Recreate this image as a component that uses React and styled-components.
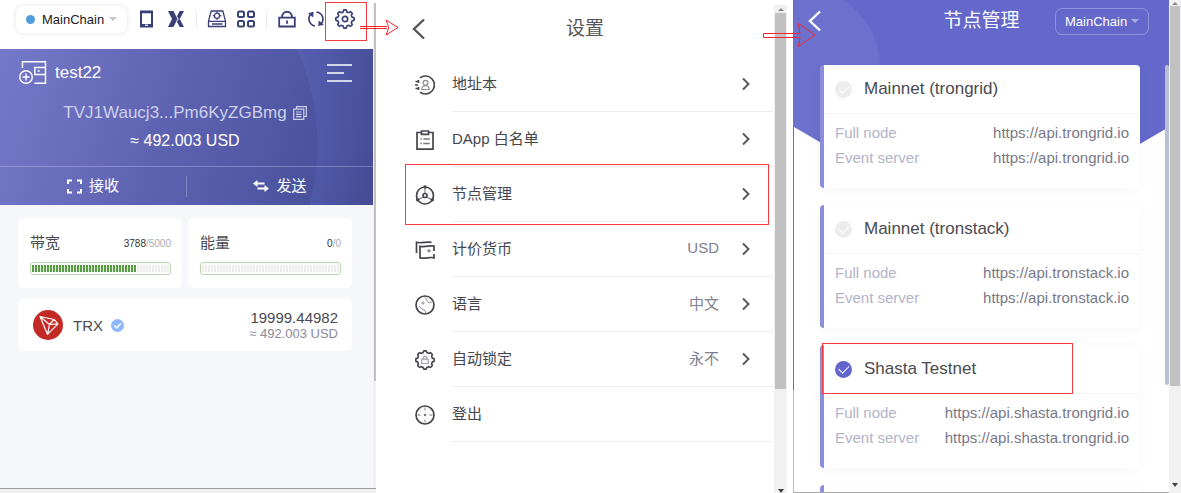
import React from "react";
import styled, { createGlobalStyle, css } from "styled-components";

const GlobalStyle = createGlobalStyle`
  * { box-sizing: border-box; }
  body {
    margin: 0;
    background: #fff;
    font-family: "Liberation Sans", "Noto Sans CJK SC", sans-serif;
    color: #4a4a50;
  }
  h1, h2, p, dl, dd, dt, ul { margin: 0; padding: 0; font-weight: 400; }
  button, select { font-family: inherit; }
`;

const Page = styled.main`
  display: grid;
  grid-template-columns: 376fr 417fr 388fr;
  height: 100vh;
  overflow: hidden;
`;

const Panel = styled.section`
  position: relative;
  display: flex;
  min-width: 0;
  min-height: 0;
`;

const Column = styled.div`
  flex: 1;
  min-width: 0;
  min-height: 0;
  display: flex;
  flex-direction: column;
`;

const IconButton = styled.button`
  position: relative;
  display: flex;
  align-items: center;
  justify-content: center;
  padding: 0;
  border: 0;
  background: none;
  color: inherit;
  cursor: pointer;
`;

const Mark = styled.span`
  position: absolute;
  inset: ${(p) => p.$inset};
  border: 1px solid #f23c40;
  pointer-events: none;
`;

const Arrow = styled.svg`
  position: absolute;
  z-index: 3;
  left: ${(p) => p.$left}px;
  top: ${(p) => p.$top}px;
  fill: none;
  stroke: #f2262c;
  pointer-events: none;
`;

/* ---------- chain selector ---------- */

const ChainBox = styled.div`
  display: flex;
  align-items: center;
  height: 27px;
  border-radius: 7px;
  ${(p) =>
    p.$dark
      ? css`
          width: 94px;
          padding: 0 9px;
          color: #fff;
          border: 1px solid rgba(255, 255, 255, 0.28);
        `
      : css`
          width: 111px;
          padding: 0 10px;
          color: #222;
          background: #fff;
          box-shadow: 0 0 5px rgba(0, 0, 0, 0.12);
        `}
`;

const Dot = styled.span`
  width: 9px;
  height: 9px;
  margin-right: 7px;
  border-radius: 50%;
  background: #4f9ddb;
`;

const ChainSelect = styled.select`
  appearance: none;
  flex: 1;
  min-width: 0;
  padding: 0;
  border: 0;
  background: none;
  color: inherit;
  font-size: 13px;
`;

const Caret = styled.span`
  border: 4px solid transparent;
  border-top-color: ${(p) => (p.$dark ? "#a9abe2" : "#c4c4cc")};
  border-bottom: 0;
`;

function Chain({ dark }) {
  return (
    <ChainBox $dark={dark}>
      {!dark && <Dot />}
      <ChainSelect aria-label="Chain" defaultValue="main">
        <option value="main">MainChain</option>
      </ChainSelect>
      <Caret $dark={dark} />
    </ChainBox>
  );
}

/* ---------- scrollbars ---------- */

const ScrollTrack = styled.div`
  width: ${(p) => p.$width}px;
  margin-top: ${(p) => p.$top}px;
  display: flex;
  flex-direction: column;
  align-items: center;
  background: #f1f1f1;
`;

const ScrollEnd = styled.span`
  display: flex;
  align-items: center;
  justify-content: center;
  height: ${(p) => p.$height}px;
`;

const ScrollThumb = styled.span`
  width: ${(p) => p.$width}px;
  flex: 0 0 ${(p) => p.$share}%;
  background: #c1c1c1;
`;

const Tip = styled.i`
  border: 3px solid transparent;
  ${(p) =>
    p.$up
      ? "border-bottom-color: #8a8a8a; border-top: 0;"
      : "border-top: 4px solid #404040; border-bottom: 0;"}
`;

const Spacer = styled.span`
  flex: 1;
`;

/* ---------- wallet ---------- */

const WalletBody = styled.div`
  flex: 1;
  display: flex;
  min-height: 0;
`;

const Toolbar = styled.header`
  display: flex;
  align-items: center;
  gap: 10px;
  height: 49px;
  padding: 0 0 11px 16px;
  color: #393f77;
`;

const ToolGroup = styled.div`
  display: flex;
  gap: 9px;
  ${IconButton} { width: 20px; height: 20px; }
`;

const Divider = styled.span`
  width: 1px;
  height: 17px;
  background: #ebebeb;
`;

const Hero = styled.section`
  display: flex;
  flex-direction: column;
  color: #fff;
  background:
    radial-gradient(circle at 85px 96px, transparent 232px, rgba(120, 140, 255, 0.12) 233px, transparent 300px),
    linear-gradient(108deg, #7579c9 0%, #5e63b1 45%, #4c54a0 80%, #444a91 100%);
`;

const HeroTop = styled.div`
  display: flex;
  align-items: center;
  gap: 8px;
  height: 24px;
  margin: 12px 21px 14px 19px;
  ${IconButton} { margin-left: auto; }
`;

const WalletName = styled.h1`
  font-size: 17px;
`;

const Address = styled.p`
  display: flex;
  align-items: center;
  justify-content: center;
  gap: 6px;
  padding-right: 3px;
  font-size: 17px;
  line-height: 28px;
  color: #ced0ec;
`;

const Balance = styled.p`
  margin-bottom: 11px;
  padding-right: 3px;
  text-align: center;
  font-size: 16px;
  line-height: 28px;
`;

const HeroActions = styled.div`
  display: flex;
  align-items: center;
  height: 39px;
  border-top: 1px solid rgba(255, 255, 255, 0.25);
`;

const HeroAction = styled(IconButton)`
  flex: 1;
  gap: 7px;
  height: 38px;
  font-size: 15px;
  color: #fff;
`;

/* Lifts CJK glyphs onto the optical centre of the icons beside them. */
const Label = styled.span`
  padding-bottom: 3px;
`;

const HeroDivider = styled.span`
  width: 1px;
  height: 21px;
  background: rgba(255, 255, 255, 0.25);
`;

const Assets = styled.div`
  flex: 1;
  display: flex;
  flex-direction: column;
  gap: 11px;
  padding: 13px 21px 0 18px;
  background: #f6f7fa;
`;

const Resources = styled.div`
  display: grid;
  grid-template-columns: 1fr 1fr;
  gap: 6px;
`;

const Card = styled.section`
  background: #fff;
  border-radius: 5px;
`;

const ResourceCard = styled(Card)`
  height: 70px;
  padding: 13px 11px 0 12px;
`;

const ResourceHead = styled.div`
  display: flex;
  align-items: center;
  justify-content: space-between;
  height: 24px;
  margin-bottom: 7px;
`;

const ResourceName = styled.h2`
  padding-bottom: 3px;
  font-size: 15px;
`;

const Usage = styled.span`
  font-size: 10px;
  color: ${(p) => (p.$muted ? "#aaaab2" : "#333")};
`;

const Meter = styled.div`
  height: 13px;
  padding: 2px 1px;
  border: 1px solid #b9d8af;
  border-radius: 3px;
`;

const MeterTrack = styled.div`
  height: 7px;
  background: repeating-linear-gradient(90deg, #ececec 0 2px, #fff 2px 3px);
`;

const MeterFill = styled.div`
  height: 7px;
  background: repeating-linear-gradient(90deg, #5a9c45 0 2px, #e4f0df 2px 3px);
`;

function Resource({ name, used, total }) {
  const share = total ? (used / total) * 100 : 0;
  return (
    <ResourceCard>
      <ResourceHead>
        <ResourceName>{name}</ResourceName>
        <Usage>
          {used}
          <Usage $muted>/{total}</Usage>
        </Usage>
      </ResourceHead>
      <Meter role="meter" aria-label={name} aria-valuenow={used} aria-valuemin={0} aria-valuemax={total}>
        <MeterTrack>
          <MeterFill style={{ width: `${share}%` }} />
        </MeterTrack>
      </Meter>
    </ResourceCard>
  );
}

const TokenCard = styled(Card)`
  display: flex;
  align-items: center;
  height: 52px;
  padding: 0 14px 0 15px;
`;

const TokenName = styled.span`
  margin: 0 8px 0 10px;
  font-size: 15px;
`;

const TokenValue = styled.div`
  margin-left: auto;
  text-align: right;
`;

const Amount = styled.p`
  font-size: 15px;
  line-height: 17px;
`;

const Fiat = styled.p`
  font-size: 13px;
  line-height: 15px;
  color: #8a8a98;
`;

const BottomEdge = styled.div`
  height: 5px;
  border-top: 1px solid #9c9c9c;
  background: #f0f0f0;
`;

/* ---------- settings ---------- */

const SettingsColumn = styled(Column)`
  padding-left: 20px;
`;

const SettingsHeader = styled.header`
  display: grid;
  grid-template-columns: 1fr auto 1fr;
  align-items: center;
  height: 57px;
  color: #555;
`;

const BackButton = styled(IconButton)`
  justify-self: start;
  margin-left: ${(p) => p.$left}px;
`;

const Title = styled.h1`
  font-size: 19px;
  line-height: 28px;
`;

const SettingsList = styled.ul`
  list-style: none;
`;

const SettingItem = styled.li`
  position: relative;
`;

const SettingButton = styled.button`
  display: flex;
  align-items: center;
  gap: 17px;
  width: 100%;
  height: 55px;
  padding: 0 1px 0 19px;
  border: 0;
  background: none;
  color: #45454d;
  font-size: 15px;
  text-align: left;
  cursor: pointer;
`;

const SettingBody = styled.span`
  flex: 1;
  align-self: stretch;
  display: flex;
  align-items: center;
  gap: 23px;
  padding-right: 23px;
  border-bottom: 1px solid #ededed;
`;

const SettingValue = styled(Label)`
  margin-left: auto;
  color: #80808e;
`;

const PanelGap = styled.div`
  width: 6px;
`;

/* ---------- nodes ---------- */

const LeftRule = styled.div`
  width: 1px;
  background: linear-gradient(#6468cb 0 22px, #dd4a55 22px 390px, #bdbdbd 390px);
`;

const NodesColumn = styled(Column)`
  position: relative;
  border-bottom: 1px solid #a8a8a8;
  &::before {
    content: "";
    position: absolute;
    inset: 0 0 auto 0;
    height: 162px;
    background: radial-gradient(circle at 10px 65px, #6d71ce 75px, #6468cb 76px);
    clip-path: polygon(0 0, 100% 0, 100% 127px, calc(100% - 60px) 162px, 60px 162px, 0 127px);
  }
`;

const NodesHeader = styled.header`
  position: relative;
  display: grid;
  grid-template-columns: 1fr auto 1fr;
  align-items: center;
  flex: 0 0 65px;
  padding-bottom: 23px;
  color: #fff;
  ${ChainBox} { justify-self: end; margin-right: 20px; }
`;

const NodesScroll = styled.div`
  position: relative;
  flex: 1;
  min-height: 0;
  display: flex;
  overflow: hidden;
`;

const NodeList = styled.div`
  flex: 1;
  display: flex;
  flex-direction: column;
  gap: 17px;
  padding: 0 25px 0 26px;
`;

const NodeThumb = styled.span`
  width: 4px;
  height: 75%;
  border-radius: 2px;
  background: #bac0d3;
`;

const NodeCard = styled.section`
  flex: none;
  min-height: 123px;
  border-left: 4px solid #8b8edb;
  border-radius: 4px;
  background: #fff;
  box-shadow: 0 2px 12px rgba(0, 0, 0, 0.04);
`;

const NodeHead = styled.label`
  position: relative;
  display: flex;
  align-items: center;
  gap: 12px;
  height: 49px;
  padding: 0 11px;
  border-bottom: 1px solid #f5f5f5;
  font-size: 17px;
`;

const Radio = styled.input`
  appearance: none;
  display: flex;
  align-items: center;
  justify-content: center;
  width: 17px;
  height: 17px;
  margin: 0;
  border-radius: 50%;
  background: #ececec;
  &:checked { background: #6266cb; }
  &::after {
    content: "";
    width: 9px;
    height: 5px;
    margin-bottom: 3px;
    border: solid #fff;
    border-width: 0 0 1px 1px;
    transform: rotate(-45deg);
  }
`;

const NodeInfo = styled.dl`
  padding: 6px 11px 18px;
  font-size: 15px;
  line-height: 25px;
`;

const NodeRow = styled.div`
  display: flex;
  justify-content: space-between;
  dt { color: #b3b3c8; }
  dd { color: #787887; }
`;

function Node({ name, url, checked, marked }) {
  return (
    <NodeCard>
      <NodeHead>
        <Radio type="radio" name="node" defaultChecked={checked} />
        {name}
        {marked && <Mark $inset="-2px 67px -1px -2px" />}
      </NodeHead>
      <NodeInfo>
        <NodeRow>
          <dt>Full node</dt>
          <dd>{url}</dd>
        </NodeRow>
        <NodeRow>
          <dt>Event server</dt>
          <dd>{url}</dd>
        </NodeRow>
      </NodeInfo>
    </NodeCard>
  );
}

/* ---------- drawings ---------- */

const Svg = ({ w = 20, h = w, sw = 1.5, children, ...rest }) => (
  <svg width={w} height={h} viewBox={`0 0 ${w} ${h}`} fill="none" stroke="currentColor" strokeWidth={sw} aria-hidden="true" {...rest}>
    {children}
  </svg>
);

const gearPath = (c, r, amp, teeth) => {
  let d = "";
  for (let i = 0; i <= 96; i++) {
    const a = (i / 96) * Math.PI * 2;
    const k = Math.max(-1, Math.min(1, 1.8 * Math.cos(teeth * a)));
    const q = r + amp * k;
    d += `${i ? "L" : "M"}${(c + q * Math.sin(a)).toFixed(2)} ${(c - q * Math.cos(a)).toFixed(2)}`;
  }
  return d + "Z";
};

const PhoneIcon = () => (
  <Svg>
    <path strokeWidth="2" d="M4 2.5h11v15H4z" />
    <path strokeWidth="2" d="M4 3.2h11M4 16h11" />
    <path stroke="#fff" strokeWidth="1.2" d="M8 16.2h3" />
  </Svg>
);
const XIcon = () => (
  <Svg>
    <path fill="currentColor" stroke="none" d="M2 2h5.5l4 8-4 8H2l4-8z" />
    <path fill="currentColor" stroke="none" d="M18 2h-4.3l-2.8 5.3 1.8 2.7-1.8 2.7 2.8 5.3H18l-4.3-8z" />
  </Svg>
);
const DiskIcon = () => (
  <Svg sw={1.3}>
    <path d="M4.2 2h11.6L18.5 12v5.5h-17V12zM1.5 12.3h17M5 15h10.500" />
    <circle cx="10" cy="6.700" r="2.600" />
    <path d="M5.800 6.700h1.600M12.600 6.700h1.600M10 9.300v1.500M10 2.800v1.300" />
  </Svg>
);
const GridIcon = () => (
  <Svg sw={2}>
    <rect x="2" y="2.500" width="6" height="5.500" rx="1.500" />
    <rect x="12" y="2.500" width="6" height="5.500" rx="1.500" />
    <rect x="2" y="12" width="6" height="5.500" rx="1.500" />
    <rect x="12" y="12" width="6" height="5.500" rx="1.500" />
  </Svg>
);
const LockIcon = () => (
  <Svg sw={1.8}>
    <path d="M2.200 8.700h15.600v8.800H2.200zM5 8.500C5 .8 15 .8 15 8.500M10 11.500v3.200" />
  </Svg>
);
const RefreshIcon = () => (
  <Svg sw={1.700}>
    <path d="M9 17A7.200 7.200 0 0 1 4.500 5.500M10.500 3a7.200 7.200 0 0 1 4.800 11.700" />
    <path fill="currentColor" stroke="none" d="M2 4.200l5.600-1.400-.4 5.600zM17.800 15.700l-5.600 1.400.5-5.600z" />
  </Svg>
);
const GearIcon = () => (
  <Svg sw={1.700}>
    <path d={gearPath(10, 8.2, 1, 8)} />
    <circle cx="10" cy="10" r="2.700" />
  </Svg>
);
const WalletIcon = () => (
  <Svg w={28} h={26} sw={1.400}>
    <path d="M3.500 8V1.700h23v21.600H15.500M26.500 7.500H15.800v7h10.700M16 14.500h10.500" />
    <circle cx="7" cy="17" r="6.300" />
    <path d="M7 13.500v7M3.500 17h7M18.500 11h2.200" />
  </Svg>
);
const MenuIcon = () => (
  <Svg w={25} h={20}>
    <path d="M0 2h25M0 10h17M0 18h25" />
  </Svg>
);
const CopyIcon = () => (
  <Svg w={14} sw={1.200}>
    <path d="M3.500 3V.700h9.800v9.800H11M.700 3.200h10.100v10.100H.700zM3 6h5.500M3 8.300h5.500M3 10.600h5.500" />
  </Svg>
);
const ReceiveIcon = () => (
  <Svg w={15} sw={2}>
    <path d="M1 5V1.500h4M10 1.500h4V5M14 10v3.500h-4M5 13.500H1V10" />
  </Svg>
);
const SendIcon = () => (
  <Svg w={16} h={14} sw={2}>
    <path d="M3 4.500h8.500M4.500 9.500H13" />
    <path fill="currentColor" stroke="none" d="M0 4.500 4.500 1v7zM16 9.500 11.500 6v7z" />
  </Svg>
);
const TronLogo = () => (
  <Svg w={30} sw={1.200}>
    <circle cx="15" cy="15" r="15" fill="#c42a25" stroke="none" />
    <path stroke="#fff" strokeLinejoin="round" d="M7 6.500 21 9.500l4 4.300-10.500 10.500zM7 6.500l9.500 8 8.500-.7M16.500 14.500l-2 9.800M16.500 14.500 21 9.500" />
  </Svg>
);
const VerifiedIcon = () => (
  <Svg w={13}>
    <circle cx="6.500" cy="6.500" r="6.500" fill="#8db8fb" stroke="none" />
    <path stroke="#fff" d="m3.300 6.500 2.300 2.400 4.200-4.400" />
  </Svg>
);
const BackIcon = () => (
  <Svg w={14} h={22} sw={2.400}>
    <path d="M12 1.500 2 11l10 9.500" />
  </Svg>
);
const ChevronIcon = () => (
  <Svg w={8} h={14} sw={2}>
    <path stroke="#5a5a5a" d="m1 1.500 5.500 5.500L1 12.500" />
  </Svg>
);
const BookIcon = () => (
  <Svg sw={1.600}>
    <path d="M5 2.800a9 9 0 1 1 0 14.400M.5 6.500h3M0 10h3M.5 13.500h3M3.500 5v3M3.500 12v3" />
    <g stroke="#8c8c96" strokeWidth="1.200">
      <circle cx="10.500" cy="7.800" r="2.400" />
      <path d="M6.800 14.500c0-5 7.400-5 7.400 0z" />
    </g>
  </Svg>
);
const ClipboardIcon = () => (
  <Svg sw={1.700}>
    <path d="M6 2.500H2v16.700h16V2.500h-4M6.500 1h7v3.300h-7z" />
    <path stroke="#777783" strokeWidth="1.300" d="M5.300 9h1.500M8.300 9h6.500M5.300 13.500h1.500M8.300 13.500h6.500" />
  </Svg>
);
const NodeIcon = () => (
  <Svg sw={1.700}>
    <circle cx="10" cy="10.500" r="8.500" />
    <circle cx="10" cy="10.500" r="2" />
    <path stroke="#777783" d="M10 8V2M8 12l-5 3M12 12l5 3" strokeWidth="1.100" />
    <g fill="currentColor" stroke="none">
      <circle cx="10" cy="2" r="1.700" />
      <circle cx="2.600" cy="14.800" r="1.700" />
      <circle cx="17.400" cy="14.800" r="1.700" />
    </g>
  </Svg>
);
const CurrencyIcon = () => (
  <Svg sw={1.700}>
    <path d="M1.500 13V2.300c5 1.600 9.500-1.200 15 0M19 11V6c-4.500-.8-8 1.500-14 .3v11.500c6 1.200 9-1.200 14 0V14" />
    <path stroke="#777783" strokeWidth="1.200" d="M14 9v3.500M12.200 10.800h3.600" />
  </Svg>
);
const GlobeIcon = () => (
  <Svg sw={1.700}>
    <circle cx="10" cy="10" r="9" />
    <g stroke="#a0a0aa" strokeWidth="1.100">
      <path d="M9.500 2.500c3 1 2 4 4 5s3-1.500 4.500-1M3.500 11c2.500.5 2 3 4.500 3.500 2 .5 3 1.500 2.500 3.500" />
      <circle cx="8" cy="8" r="1" />
    </g>
  </Svg>
);
const AutoLockIcon = () => (
  <Svg sw={1.700}>
    <path d={gearPath(10, 8.4, 0.8, 8)} />
    <path stroke="#a0a0aa" strokeWidth="1.200" d="M6.800 9.200h6.400v4.300H6.800zM8 9c0-3.500 4-3.500 4 0" />
  </Svg>
);
const LogoutIcon = () => (
  <Svg sw={1.700}>
    <circle cx="10" cy="10" r="9" />
    <path stroke="#a0a0aa" strokeWidth="1.300" d="M10 2.500v3M10 14.500v3M2.500 10h3M14.500 10h3" />
    <circle cx="10" cy="10" r="1.300" fill="#777783" stroke="none" />
  </Svg>
);

/* ---------- data ---------- */

const tools = [
  [["Mobile", PhoneIcon], ["Exchange", XIcon]],
  [["Ledger", DiskIcon], ["DApps", GridIcon]],
  [["Lock", LockIcon], ["Refresh", RefreshIcon], ["Settings", GearIcon]],
];

const settings = [
  { label: "地址本", Icon: BookIcon },
  { label: "DApp 白名单", Icon: ClipboardIcon },
  { label: "节点管理", Icon: NodeIcon, marked: true },
  { label: "计价货币", Icon: CurrencyIcon, value: "USD" },
  { label: "语言", Icon: GlobeIcon, value: "中文" },
  { label: "自动锁定", Icon: AutoLockIcon, value: "永不" },
  { label: "登出", Icon: LogoutIcon, last: true },
];

const nodes = [
  { name: "Mainnet (trongrid)", url: "https://api.trongrid.io" },
  { name: "Mainnet (tronstack)", url: "https://api.tronstack.io" },
  { name: "Shasta Testnet", url: "https://api.shasta.trongrid.io", checked: true, marked: true },
];

function Wallet() {
  return (
    <Panel>
      <Column>
        <WalletBody>
          <Column>
            <Toolbar>
              <Chain />
              {tools.map((group, i) => (
                <React.Fragment key={i}>
                  {i > 0 && <Divider />}
                  <ToolGroup>
                    {group.map(([name, Icon]) => (
                      <IconButton key={name} aria-label={name}>
                        <Icon />
                        {name === "Settings" && <Mark $inset="-7px -12px -12px -10px" />}
                      </IconButton>
                    ))}
                  </ToolGroup>
                </React.Fragment>
              ))}
            </Toolbar>
            <Hero>
              <HeroTop>
                <WalletIcon />
                <WalletName>test22</WalletName>
                <IconButton aria-label="Menu"><MenuIcon /></IconButton>
              </HeroTop>
              <Address>
                TVJ1Waucj3...Pm6KyZGBmg
                <IconButton aria-label="Copy"><CopyIcon /></IconButton>
              </Address>
              <Balance>≈ 492.003 USD</Balance>
              <HeroActions>
                <HeroAction><ReceiveIcon /><Label>接收</Label></HeroAction>
                <HeroDivider />
                <HeroAction><SendIcon /><Label>发送</Label></HeroAction>
              </HeroActions>
            </Hero>
            <Assets>
              <Resources>
                <Resource name="带宽" used={3788} total={5000} />
                <Resource name="能量" used={0} total={0} />
              </Resources>
              <TokenCard>
                <TronLogo />
                <TokenName>TRX</TokenName>
                <VerifiedIcon />
                <TokenValue>
                  <Amount>19999.44982</Amount>
                  <Fiat>≈ 492.003 USD</Fiat>
                </TokenValue>
              </TokenCard>
            </Assets>
          </Column>
          <ScrollTrack $width={3} $top={3}>
            <ScrollThumb $width={2} $share={78} />
          </ScrollTrack>
        </WalletBody>
        <BottomEdge />
      </Column>
    </Panel>
  );
}

function Settings() {
  return (
    <Panel>
      <Arrow $left={-17} $top={19} width="40" height="17" strokeWidth="1">
        <path d="M1 7.500h27M1 9.500h27M27 1l12 7.500L27 16l2.500-6.500v-2z" />
      </Arrow>
      <SettingsColumn>
        <SettingsHeader>
          <BackButton $left={16} aria-label="Back"><BackIcon /></BackButton>
          <Title>设置</Title>
        </SettingsHeader>
        <SettingsList>
          {settings.map(({ label, Icon, value, marked, last }) => (
            <SettingItem key={label}>
              <SettingButton>
                <Icon />
                <SettingBody>
                  <Label>{label}</Label>
                  <SettingValue>{value}</SettingValue>
                  {!last && <ChevronIcon />}
                </SettingBody>
              </SettingButton>
              {marked && <Mark $inset="-3px 5px -3px 9px" />}
            </SettingItem>
          ))}
        </SettingsList>
      </SettingsColumn>
      <ScrollTrack $width={13} $top={5}>
        <ScrollEnd $height={8}><Tip $up /></ScrollEnd>
        <ScrollThumb $width={11} $share={77} />
        <Spacer />
        <ScrollEnd $height={4}><Tip /></ScrollEnd>
      </ScrollTrack>
      <PanelGap />
    </Panel>
  );
}

function Nodes() {
  return (
    <Panel>
      <LeftRule />
      <NodesColumn>
        <NodesHeader>
          <BackButton $left={14} aria-label="Back"><BackIcon /></BackButton>
          <Title>节点管理</Title>
          <Chain dark />
        </NodesHeader>
        <NodesScroll>
          <NodeList>
            {nodes.map((node) => (
              <Node key={node.name} {...node} />
            ))}
            <NodeCard />
          </NodeList>
          <NodeThumb />
        </NodesScroll>
      </NodesColumn>
      <ScrollTrack $width={12} $top={0}>
        <ScrollEnd $height={6}><Tip $up /></ScrollEnd>
        <ScrollThumb $width={10} $share={77} />
        <Spacer />
        <ScrollEnd $height={17}><Tip /></ScrollEnd>
      </ScrollTrack>
      <Arrow $left={-31} $top={22} width="54" height="26" strokeWidth="1">
        <path d="M1.500 11.500H38L36.500 1.500 53 13 36.500 24.500 38 15.500H1.500z" />
      </Arrow>
    </Panel>
  );
}

export default function App() {
  return (
    <>
      <GlobalStyle />
      <Page>
        <Wallet />
        <Settings />
        <Nodes />
      </Page>
    </>
  );
}
